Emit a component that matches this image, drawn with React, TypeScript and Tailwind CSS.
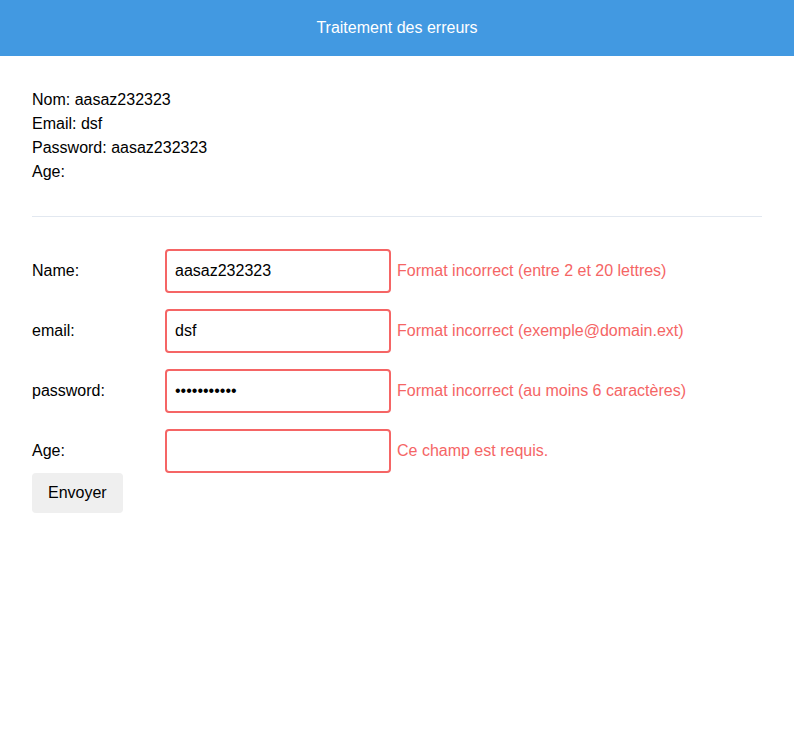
import React, { useState } from 'react';

type Field = {
  key: 'name' | 'email' | 'password' | 'age';
  label: string;
  type: string;
  error: string;
};

const fields: Field[] = [
  { key: 'name', label: 'Name:', type: 'text', error: 'Format incorrect (entre 2 et 20 lettres)' },
  { key: 'email', label: 'email:', type: 'text', error: 'Format incorrect (exemple@domain.ext)' },
  { key: 'password', label: 'password:', type: 'password', error: 'Format incorrect (au moins 6 caractères)' },
  { key: 'age', label: 'Age:', type: 'text', error: 'Ce champ est requis.' },
];

export default function App() {
  const [values, setValues] = useState({
    name: 'aasaz232323',
    email: 'dsf',
    password: 'aasaz232323',
    age: '',
  });

  return (
    <div className="min-h-screen bg-white text-base text-black" style={{ fontFamily: '"Liberation Sans", Arial, sans-serif' }}>
      <header className="flex h-14 items-center justify-center bg-[#4299e1] text-white">
        Traitement des erreurs
      </header>

      <main className="p-8">
        <div className="leading-6">
          <p>Nom: {values.name}</p>
          <p>Email: {values.email}</p>
          <p>Password: {values.password}</p>
          <p>Age: {values.age}</p>
        </div>

        <hr className="my-8 border-[#e2e8f0]" />

        <form className="flex flex-col gap-4" onSubmit={(event) => event.preventDefault()}>
          {fields.map((field) => (
            <div key={field.key} className="flex items-center">
              <label className="w-[133px]">{field.label}</label>
              <input
                type={field.type}
                value={values[field.key]}
                onChange={(event) => setValues({ ...values, [field.key]: event.target.value })}
                className="h-11 w-[226px] rounded border-2 border-[#f56565] px-2 outline-none"
              />
              <span className="ml-1.5 text-[#f56565]">{field.error}</span>
            </div>
          ))}
        </form>
        <button type="button" className="h-10 rounded bg-[#efefef] px-4">
          Envoyer
        </button>
      </main>
    </div>
  );
}
